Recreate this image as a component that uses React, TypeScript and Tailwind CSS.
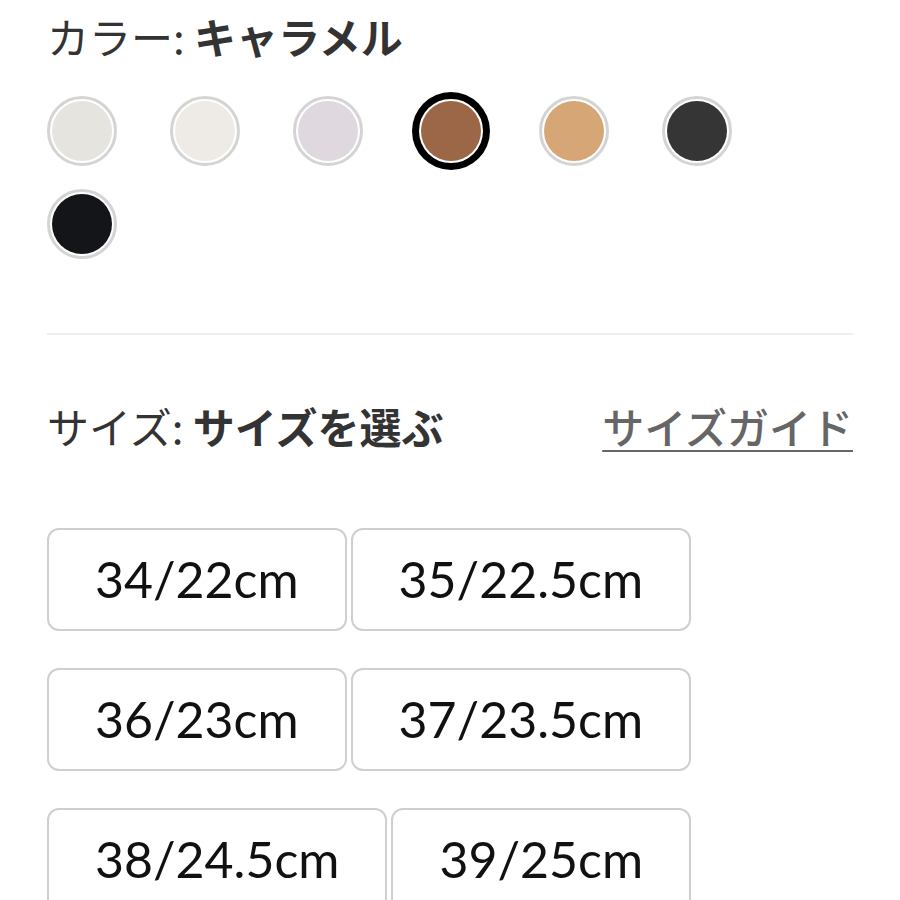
import React, { useState } from 'react';

const jp = { fontFamily: '"Noto Sans CJK JP", "Noto Sans", sans-serif' };

type Swatch = { name: string; hex: string };

const swatches: Swatch[] = [
    { name: 'ライトグレー', hex: '#e6e4df' },
    { name: 'アイボリー', hex: '#eeeae5' },
    { name: 'ラベンダー', hex: '#e0d8df' },
    { name: 'キャラメル', hex: '#9b6747' },
    { name: 'ベージュ', hex: '#d7a677' },
    { name: 'チャコール', hex: '#353535' },
    { name: 'ブラック', hex: '#141518' },
];

const sizes = ['34/22cm', '35/22.5cm', '36/23cm', '37/23.5cm', '38/24.5cm', '39/25cm'];

export default function App() {
    const [color, setColor] = useState('キャラメル');
    const [size, setSize] = useState<string | null>(null);

    return (
        <div className="w-[900px] h-[900px] overflow-hidden bg-white px-[47px] pt-[12px] text-[#333333]" style={jp}>
            {/* Color */}
            <div className="h-[48px] leading-[48px] text-[42px] whitespace-nowrap">
                <span className="font-normal">カラー:</span>{' '}
                <span className="font-bold">{color}</span>
            </div>

            <div className="mt-[36px] grid grid-cols-[repeat(6,70px)] gap-x-[53px] gap-y-[23px]">
                {swatches.map((s) => {
                    const active = s.name === color;
                    return (
                        <button
                            key={s.name}
                            onClick={() => setColor(s.name)}
                            className={`w-[70px] h-[70px] rounded-full bg-white p-[2px] border-[3px] ${
                                active ? 'border-black ring-[4px] ring-black' : 'border-[#d4d4d4]'
                            }`}
                        >
                            <span className="block w-full h-full rounded-full" style={{ backgroundColor: s.hex }} />
                        </button>
                    );
                })}
            </div>

            <div className="mt-[74px] h-[2px] bg-[#eeeeee]" />

            {/* Size */}
            <div className="mt-[66px] h-[48px] flex items-center justify-between text-[42px] whitespace-nowrap">
                <div>
                    <span className="font-normal">サイズ:</span>{' '}
                    <span className="font-bold">{size ?? 'サイズを選ぶ'}</span>
                </div>
                <a className="font-medium text-[#666666] underline decoration-2 underline-offset-[6px]">サイズガイド</a>
            </div>

            <div className="mt-[79px] flex flex-wrap gap-x-[4px] gap-y-[37px]">
                {sizes.map((s) => (
                    <button
                        key={s}
                        onClick={() => setSize(s)}
                        className="h-[103px] px-[46px] rounded-[12px] border-2 border-[#cfcfcf] bg-white text-[50px] font-normal text-[#111111]"
                        style={{ fontFamily: 'Lato, "Open Sans", sans-serif' }}
                    >
                        {s}
                    </button>
                ))}
            </div>
        </div>
    );
}
